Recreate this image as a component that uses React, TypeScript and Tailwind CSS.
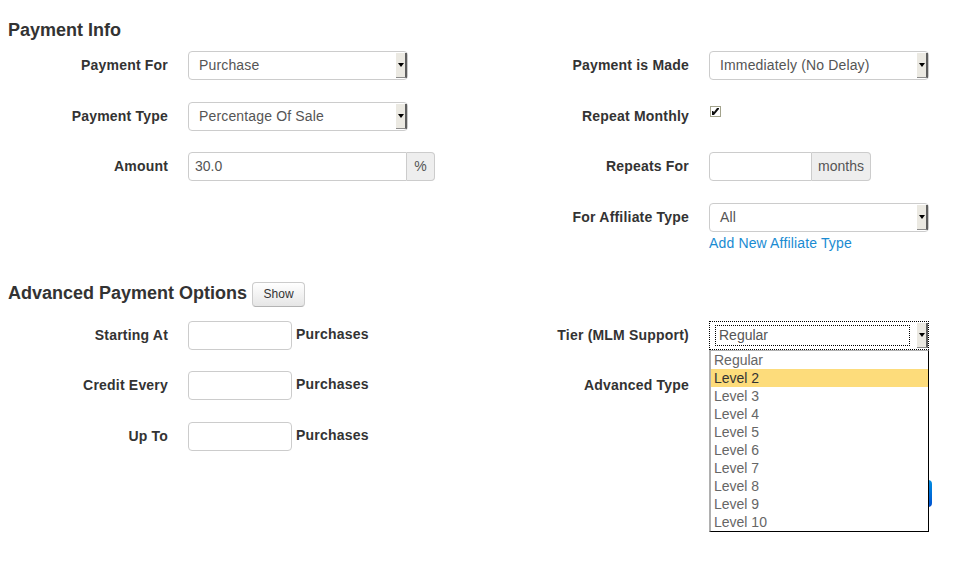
import React from "react";

// ─── Small building blocks ────────────────────────────────────────────────────

function Arrow() {
  return (
    <div className="w-[11px] my-[1px] bg-[#ebe9e2] border-r-2 border-r-[#5e5e5e] border-b border-b-[#8c8c8c] flex items-center justify-center">
      <span className="w-0 h-0 border-l-[3px] border-r-[3px] border-t-[4px] border-l-transparent border-r-transparent border-t-black" />
    </div>
  );
}

function Select({ value }: { value: string }) {
  return (
    <div className="h-[29px] w-[220px] border border-[#ccc] rounded-[4px] bg-white flex items-stretch">
      <span className="flex-1 flex items-center pl-[10px] text-[14px] tracking-[0.15px] text-[#555]">{value}</span>
      <Arrow />
    </div>
  );
}

function Input({ width, value = "" }: { width: string; value?: string }) {
  return (
    <div className={`h-[29px] ${width} border border-[#ccc] rounded-[4px] bg-white flex items-center px-[6px] text-[14px] text-[#555]`}>
      {value}
    </div>
  );
}

function AddonInput({ width, value = "", addon, addonWidth }: { width: string; value?: string; addon: string; addonWidth: string }) {
  return (
    <div className="flex h-[29px]">
      <div className={`${width} border border-[#ccc] rounded-l-[4px] bg-white flex items-center px-[6px] text-[14px] text-[#555]`}>
        {value}
      </div>
      <div className={`${addonWidth} border border-l-0 border-[#ccc] rounded-r-[4px] bg-[#eee] flex items-center justify-center text-[14px] text-[#555]`}>
        {addon}
      </div>
    </div>
  );
}

function Row({ label, children }: { label: string; children?: React.ReactNode }) {
  return (
    <div className="flex items-center h-[29px]">
      <label className="w-[160px] text-right text-[14px] tracking-[0.2px] font-bold text-[#333] shrink-0">{label}</label>
      <div className="ml-[20px] flex items-center">{children}</div>
    </div>
  );
}

function Checkbox() {
  return (
    <svg width="11" height="11" viewBox="0 0 11 11" className="mt-[-9px] ml-[1px]">
      <rect x="0.5" y="0.5" width="10" height="10" fill="white" stroke="#a3a38c" />
      <path d="M2 5 L3 5 L4 6 L7 2 L9 2 L9 3 L4 9 L2 9 Z" fill="#111" />
    </svg>
  );
}

const LEVELS = ["Regular", "Level 2", "Level 3", "Level 4", "Level 5", "Level 6", "Level 7", "Level 8", "Level 9", "Level 10"];

// ─── Page ─────────────────────────────────────────────────────────────────────

export default function App() {
  return (
    <div className="w-[969px] h-[562px] overflow-hidden bg-white pl-2 font-['Liberation_Sans',Arial,sans-serif] text-[#333]">
      <h3 className="pt-[20px] text-[18px] leading-[20px] font-bold">Payment Info</h3>

      {/* Basic payment fields */}
      <div className="flex mt-[11px]">
        <div className="w-[521px] flex flex-col gap-[21.5px]">
          <Row label="Payment For">
            <Select value="Purchase" />
          </Row>
          <Row label="Payment Type">
            <Select value="Percentage Of Sale" />
          </Row>
          <Row label="Amount">
            <AddonInput width="w-[219px]" value="30.0" addon="%" addonWidth="w-[28px]" />
          </Row>
        </div>
        <div className="flex flex-col">
          <div className="flex flex-col gap-[21.5px]">
            <Row label="Payment is Made">
              <Select value="Immediately (No Delay)" />
            </Row>
            <Row label="Repeat Monthly">
              <Checkbox />
            </Row>
            <Row label="Repeats For">
              <AddonInput width="w-[103px]" addon="months" addonWidth="w-[59px]" />
            </Row>
            <Row label="For Affiliate Type">
              <Select value="All" />
            </Row>
          </div>
          <a className="ml-[180px] mt-[3px] text-[14px] leading-[16px] tracking-[0.15px] text-[#1a8bd2]">Add New Affiliate Type</a>
        </div>
      </div>

      {/* Advanced options */}
      <div className="flex items-start mt-[31px]">
        <h3 className="text-[18px] leading-[20px] font-bold mt-[1px]">Advanced Payment Options</h3>
        <button className="ml-[5px] w-[53px] h-[25px] border border-[#ccc] border-b-[#b3b3b3] rounded-[4px] bg-gradient-to-b from-white to-[#e6e6e6] text-[12px] text-[#333]">
          Show
        </button>
      </div>

      <div className="flex mt-[14px]">
        <div className="w-[521px] flex flex-col gap-[21.5px]">
          {["Starting At", "Credit Every", "Up To"].map((l) => (
            <Row key={l} label={l}>
              <Input width="w-[104px]" />
              <span className="ml-[4px] text-[14px] tracking-[0.2px] font-bold text-[#333] -mt-[2px]">Purchases</span>
            </Row>
          ))}
        </div>
        <div className="flex flex-col">
          <div className="flex flex-col gap-[21.5px]">
            <Row label="Tier (MLM Support)">
              <div className="relative">
                <div className="h-[29px] w-[220px] border border-dotted border-black bg-white flex items-stretch">
                  <span className="flex-1 ml-[5px] mr-[7px] my-[3px] border border-dotted border-black flex items-center pl-[3px] text-[14px] text-[#555]">
                    Regular
                  </span>
                  <Arrow />
                </div>
                {/* open option list */}
                <ul className="absolute z-10 left-0 top-[29px] w-[220px] bg-white border-l-2 border-t border-l-[#b0b0b0] border-t-[#b0b0b0] border-r border-b border-r-black border-b-black">
                  {LEVELS.map((lv) => (
                    <li
                      key={lv}
                      className={`h-[18px] leading-[18px] pl-[3px] text-[14px] ${
                        lv === "Level 2" ? "bg-[#fddc7b] text-[#333]" : "text-[#666]"
                      }`}
                    >
                      {lv}
                    </li>
                  ))}
                </ul>
              </div>
            </Row>
            <Row label="Advanced Type" />
          </div>
          <div className="ml-[180px] w-[220px] flex justify-end mt-[80px]">
            <button className="-mr-[3px] w-[80px] h-[27px] rounded-[4px] bg-gradient-to-b from-[#0a8ee0] to-[#0050d0] text-white text-[14px]">
              Save
            </button>
          </div>
        </div>
      </div>
    </div>
  );
}
